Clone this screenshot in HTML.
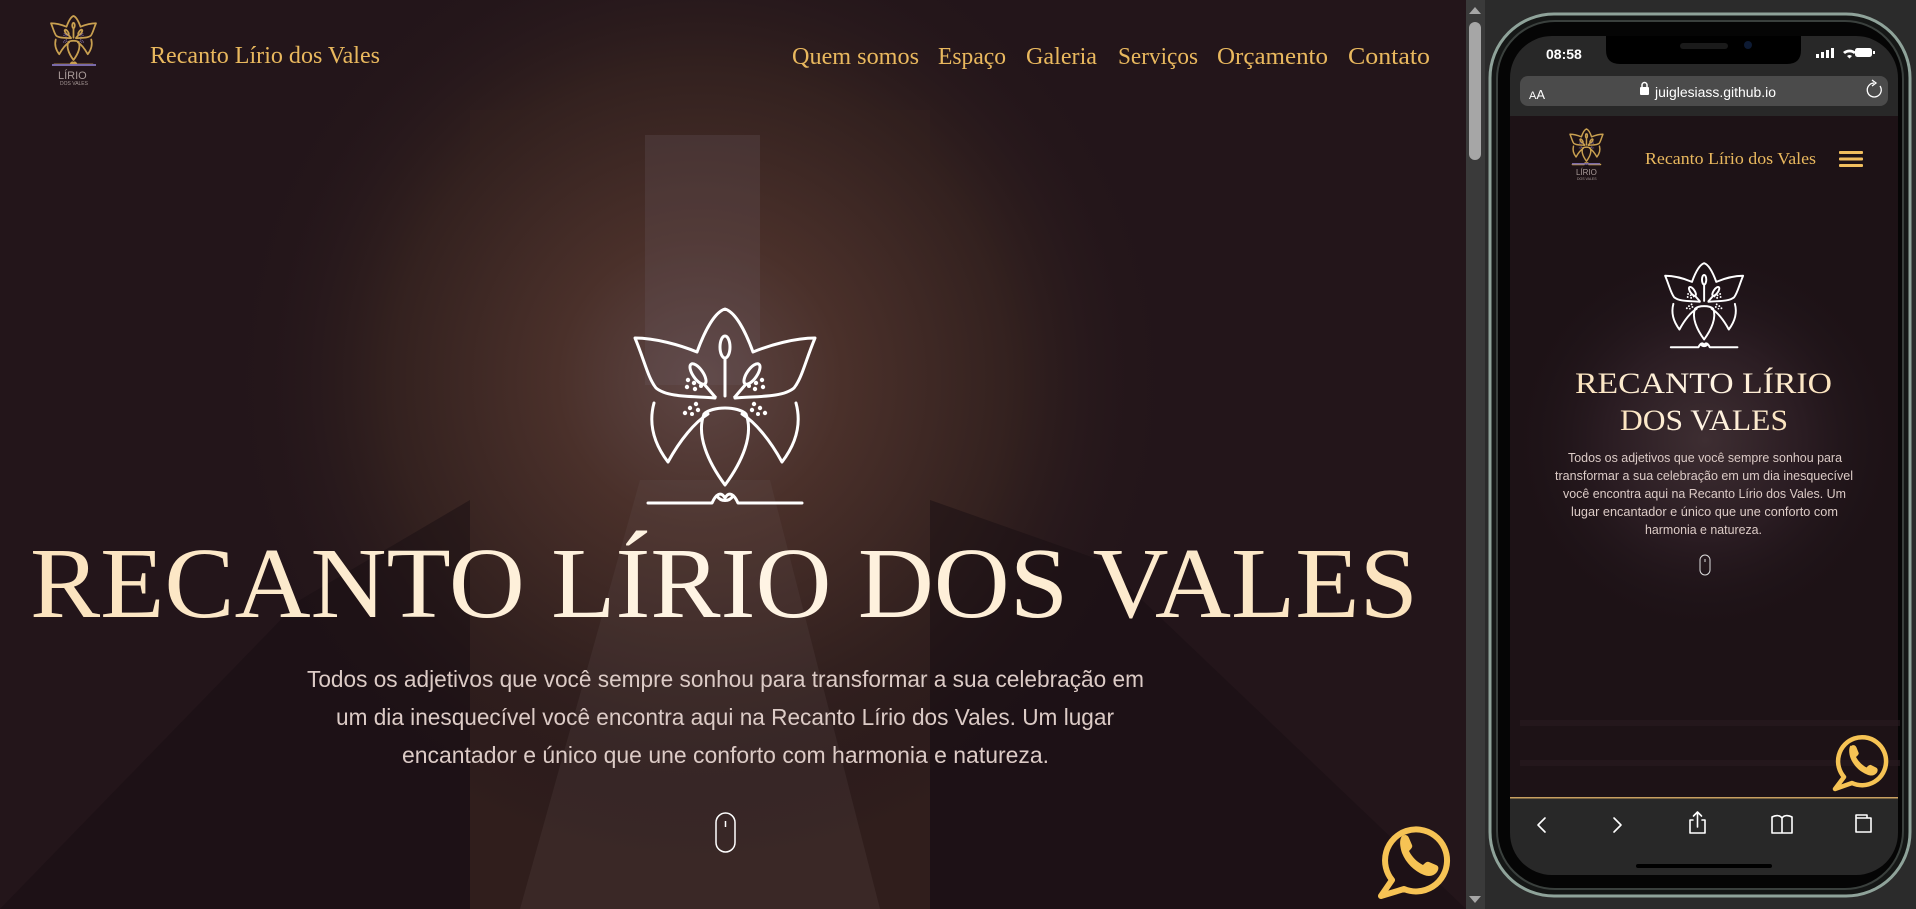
<!DOCTYPE html>
<html><head><meta charset="utf-8">
<style>
html,body{margin:0;padding:0;width:1916px;height:909px;overflow:hidden;background:#2b2b2b}
svg{position:absolute;left:0;top:0}
</style></head><body>
<svg width="1916" height="909" viewBox="0 0 1916 909" xmlns="http://www.w3.org/2000/svg">
<defs>
<radialGradient id="glow" cx="700" cy="380" r="480" gradientUnits="userSpaceOnUse">
<stop offset="0" stop-color="#5e4644"/><stop offset="0.3" stop-color="#4a302a"/><stop offset="0.65" stop-color="#33211f"/><stop offset="1" stop-color="#22151a" stop-opacity="0"/>
</radialGradient>
<radialGradient id="mglow" cx="1705" cy="440" r="200" gradientUnits="userSpaceOnUse">
<stop offset="0" stop-color="#3e2e32"/><stop offset="0.5" stop-color="#2a1c22"/><stop offset="1" stop-color="#1c1216" stop-opacity="0"/>
</radialGradient>
<linearGradient id="tg" x1="0" y1="0" x2="1" y2="0">
<stop offset="0" stop-color="#fbe3bd"/><stop offset="0.5" stop-color="#fff5e6"/><stop offset="1" stop-color="#fbe3bd"/>
</linearGradient>
<g id="lily">
<path d="M97,62 C105,40 115,22 125,19 C135,22 145,40 153,62 M97,62 C80,55 55,48 35,48 C45,72 48,88 56,98 C68,108 95,106 115,108 M153,62 C170,55 195,48 215,48 C205,72 202,88 194,98 C182,108 155,106 135,108 M54,113 C48,135 55,155 68,172 C80,150 95,132 108,124 M196,113 C202,135 195,155 182,172 C170,150 155,132 142,124 M104,124 C96,145 108,172 125,195 C142,172 154,145 146,124 C138,116 112,116 104,124 M125,69 L125,106 M48,213 L112,213 C116,204 121,201 125,208 C129,201 134,204 138,213 L202,213 M117,206 C121,212 129,212 133,206" fill="none" stroke-linecap="round" stroke-linejoin="round"/>
<ellipse cx="125" cy="57" rx="5" ry="11" fill="none"/>
<ellipse cx="98" cy="84" rx="5" ry="12" transform="rotate(-35 98 84)" fill="none"/>
<ellipse cx="152" cy="84" rx="5" ry="12" transform="rotate(35 152 84)" fill="none"/>
<path d="M104,94 L116,108 M146,94 L134,108" fill="none"/>
<g stroke="none" fill="currentColor">
<circle cx="88" cy="90" r="2.2"/><circle cx="94" cy="93" r="2.2"/><circle cx="87" cy="97" r="2.2"/><circle cx="95" cy="99" r="2.2"/><circle cx="101" cy="96" r="2"/>
<circle cx="162" cy="90" r="2.2"/><circle cx="156" cy="93" r="2.2"/><circle cx="163" cy="97" r="2.2"/><circle cx="155" cy="99" r="2.2"/><circle cx="149" cy="96" r="2"/>
<circle cx="96" cy="114" r="2.2"/><circle cx="90" cy="118" r="2.2"/><circle cx="98" cy="120" r="2.2"/><circle cx="85" cy="123" r="2.2"/><circle cx="92" cy="124" r="2"/>
<circle cx="154" cy="114" r="2.2"/><circle cx="160" cy="118" r="2.2"/><circle cx="152" cy="120" r="2.2"/><circle cx="165" cy="123" r="2.2"/><circle cx="158" cy="124" r="2"/>
</g>
</g>
</defs>

<!-- main page background -->
<rect x="0" y="0" width="1466" height="909" fill="#23151a"/>
<rect x="470" y="110" width="460" height="799" fill="#33201d" opacity="0.8"/>
<rect x="0" y="0" width="1466" height="909" fill="url(#glow)"/>
<rect x="645" y="135" width="115" height="250" fill="#6a5a62" opacity="0.25"/>
<path d="M0,909 L300,600 L470,500 L470,909 Z" fill="#170d11" opacity="0.5"/>
<path d="M1466,909 L1100,560 L930,500 L930,909 Z" fill="#170d11" opacity="0.5"/>
<path d="M520,909 L640,480 L770,480 L880,909 Z" fill="#6a5656" opacity="0.18"/>

<!-- nav -->
<g transform="translate(42.25,11.25) scale(0.25)" stroke="#c9a050" color="#9a88c8" stroke-width="7"><use href="#lily"/></g>
<rect x="52" y="64" width="44" height="2" fill="#7a6aa8"/>
<text x="58" y="79" font-family="Liberation Sans, sans-serif" font-size="11" fill="#a89a98">LÍRIO</text>
<text x="60" y="85" font-family="Liberation Sans, sans-serif" font-size="5" fill="#a89a98">DOS VALES</text>
<g font-family="Liberation Serif, serif" font-size="24" fill="#e9b85e">
<text x="150" y="63" textLength="230" lengthAdjust="spacingAndGlyphs">Recanto Lírio dos Vales</text>
<text x="792" y="64" textLength="127" lengthAdjust="spacingAndGlyphs">Quem somos</text>
<text x="938" y="64" textLength="68" lengthAdjust="spacingAndGlyphs">Espaço</text>
<text x="1026" y="64" textLength="71" lengthAdjust="spacingAndGlyphs">Galeria</text>
<text x="1118" y="64" textLength="80" lengthAdjust="spacingAndGlyphs">Serviços</text>
<text x="1217" y="64" textLength="111" lengthAdjust="spacingAndGlyphs">Orçamento</text>
<text x="1348" y="64" textLength="82" lengthAdjust="spacingAndGlyphs">Contato</text>
</g>

<!-- hero -->
<g transform="translate(600,290)" stroke="#ffffff" color="#ffffff" stroke-width="3"><use href="#lily"/></g>
<text x="30" y="617" font-family="Liberation Serif, serif" font-size="101" fill="url(#tg)" textLength="1388" lengthAdjust="spacingAndGlyphs">RECANTO LÍRIO DOS VALES</text>
<g font-family="Liberation Sans, sans-serif" font-size="23" fill="#dccbc6">
<text x="307" y="687" textLength="837" lengthAdjust="spacingAndGlyphs">Todos os adjetivos que você sempre sonhou para transformar a sua celebração em</text>
<text x="336" y="725" textLength="778" lengthAdjust="spacingAndGlyphs">um dia inesquecível você encontra aqui na Recanto Lírio dos Vales. Um lugar</text>
<text x="402" y="763" textLength="647" lengthAdjust="spacingAndGlyphs">encantador e único que une conforto com harmonia e natureza.</text>
</g>
<rect x="716" y="813" width="19" height="39" rx="9.5" fill="none" stroke="#fff" stroke-width="1.5"/>
<line x1="725.5" y1="821" x2="725.5" y2="827" stroke="#fff" stroke-width="1.5"/>
<!-- whatsapp desktop -->
<path d="M1392,880 A31,31 0 1 1 1404,889 L1381,896 Z" fill="none" stroke="#f6c354" stroke-width="6" stroke-linejoin="round"/>
<path d="M1402,836 c3,-2 6,-1 7,2 l3,7 c1,2 -1,4 -3,6 c3,6 8,11 14,14 c2,-2 4,-4 6,-3 l7,3 c3,1 3,4 1,7 c-3,4 -8,5 -13,3 c-10,-4 -18,-12 -22,-22 c-2,-6 -3,-13 0,-17 z" fill="#f6c354"/>

<!-- scrollbar -->
<rect x="1466" y="0" width="19" height="909" fill="#3a3a3a"/>
<rect x="1469" y="22" width="12" height="138" rx="6" fill="#a6a6a6"/>
<path d="M1469,14 L1475,7 L1481,14 Z" fill="#a6a6a6"/>
<path d="M1469,896 L1475,903 L1481,896 Z" fill="#a6a6a6"/>
<rect x="1485" y="0" width="431" height="909" fill="#2b2b2b"/>

<!-- phone -->
<rect x="1490" y="14" width="420" height="882" rx="64" fill="#151716" stroke="#8fa39a" stroke-width="3"/>
<rect x="1497" y="21" width="406" height="868" rx="58" fill="#050505" stroke="#3a403d" stroke-width="2"/>
<rect x="1510" y="36" width="388" height="839" rx="42" fill="#282828"/>
<path d="M1606,36 L1801,36 L1801,50 Q1801,64 1787,64 L1620,64 Q1606,64 1606,50 Z" fill="#000"/>
<rect x="1680" y="43" width="48" height="6" rx="3" fill="#1a1a1a"/>
<circle cx="1748" cy="45" r="4" fill="#0d1a33"/>
<text x="1546" y="59" font-family="Liberation Sans, sans-serif" font-weight="bold" font-size="14" fill="#fff">08:58</text>
<g fill="#fff">
<rect x="1816" y="54" width="3" height="4"/><rect x="1821" y="52" width="3" height="6"/><rect x="1826" y="50" width="3" height="8"/><rect x="1831" y="48" width="3" height="10"/>
<path d="M1843,52 a10,10 0 0 1 13,0 l-2,2 a7,7 0 0 0 -9,0 z M1847,56 a4,4 0 0 1 5,0 l-2.5,2.5 z"/>
<rect x="1855" y="48" width="17" height="9" rx="2.5"/><rect x="1873" y="51" width="2" height="3"/>
</g>
<rect x="1520" y="76" width="368" height="30" rx="8" fill="#4b4b4b"/>
<text x="1529" y="99" font-family="Liberation Sans, sans-serif" font-size="11" fill="#fff">A<tspan font-size="13">A</tspan></text>
<rect x="1640" y="87" width="9" height="8" rx="1" fill="#fff"/>
<path d="M1642,88 v-3 a2.5,2.5 0 0 1 5,0 v3" fill="none" stroke="#fff" stroke-width="1.5"/>
<text x="1655" y="97" font-family="Liberation Sans, sans-serif" font-size="13.5" fill="#fff" textLength="121" lengthAdjust="spacingAndGlyphs">juiglesiass.github.io</text>
<path d="M1880,86 a7,7 0 1 1 -6,-3" fill="none" stroke="#fff" stroke-width="1.3"/>
<path d="M1872,80 l4,3 l-4,3" fill="none" stroke="#fff" stroke-width="1.3"/>

<!-- mobile page -->
<rect x="1510" y="116" width="388" height="681" fill="#1d1216"/>
<rect x="1510" y="116" width="388" height="681" fill="url(#mglow)"/>
<rect x="1520" y="720" width="380" height="6" fill="#2a1a22" opacity="0.6"/>
<rect x="1520" y="760" width="380" height="6" fill="#2a1a22" opacity="0.6"/>
<g transform="translate(1563.6,125.5) scale(0.183)" stroke="#c9a050" color="#9a88c8" stroke-width="8"><use href="#lily"/></g>
<rect x="1572" y="163" width="28" height="1.5" fill="#7a6aa8"/>
<text x="1576" y="175" font-family="Liberation Sans, sans-serif" font-size="8" fill="#a89a98">LÍRIO</text>
<text x="1577" y="180" font-family="Liberation Sans, sans-serif" font-size="3.5" fill="#a89a98">DOS VALES</text>
<text x="1645" y="164" font-family="Liberation Serif, serif" font-size="17" fill="#e9b85e" textLength="171" lengthAdjust="spacingAndGlyphs">Recanto Lírio dos Vales</text>
<g fill="#f1bf5e"><rect x="1839" y="151" width="24" height="3" rx="1"/><rect x="1839" y="157.5" width="24" height="3" rx="1"/><rect x="1839" y="164" width="24" height="3" rx="1"/></g>
<g transform="translate(1650,255) scale(0.433)" stroke="#fff" color="#fff" stroke-width="4.5"><use href="#lily"/></g>
<g font-family="Liberation Serif, serif" font-size="30" fill="url(#tg)">
<text x="1575" y="393" textLength="257" lengthAdjust="spacingAndGlyphs">RECANTO LÍRIO</text>
<text x="1620" y="430" textLength="168" lengthAdjust="spacingAndGlyphs">DOS VALES</text>
</g>
<g font-family="Liberation Sans, sans-serif" font-size="12.5" fill="#dccbc6">
<text x="1568" y="462" textLength="274" lengthAdjust="spacingAndGlyphs">Todos os adjetivos que você sempre sonhou para</text>
<text x="1555" y="480" textLength="298" lengthAdjust="spacingAndGlyphs">transformar a sua celebração em um dia inesquecível</text>
<text x="1563" y="498" textLength="283" lengthAdjust="spacingAndGlyphs">você encontra aqui na Recanto Lírio dos Vales. Um</text>
<text x="1571" y="516" textLength="267" lengthAdjust="spacingAndGlyphs">lugar encantador e único que une conforto com</text>
<text x="1645" y="534" textLength="117" lengthAdjust="spacingAndGlyphs">harmonia e natureza.</text>
</g>
<rect x="1700" y="555" width="10" height="20" rx="5" fill="none" stroke="#ddd" stroke-width="1"/>
<line x1="1705" y1="559" x2="1705" y2="562" stroke="#ddd" stroke-width="1"/>
<!-- whatsapp mobile -->
<path d="M1844,777 A24,24 0 1 1 1852,783 L1835,789 Z" fill="none" stroke="#f6c354" stroke-width="4.5" stroke-linejoin="round"/>
<path d="M1851,746 c2,-1.5 4.5,-1 5.5,1.5 l2,5 c1,1.5 -1,3 -2.5,4.5 c2.5,4.5 6,8 10.5,10.5 c1.5,-1.5 3,-3 4.5,-2.5 l5,2.5 c2,1 2,3 1,5 c-2,3 -6,4 -10,2 c-7.5,-3 -13.5,-9 -16.5,-16.5 c-1.5,-4.5 -2,-9.5 0,-12.5 z" fill="#f6c354"/>

<!-- bottom toolbar -->
<rect x="1510" y="797" width="388" height="1.5" fill="#c9a060"/>
<g fill="none" stroke="#fff" stroke-width="1.6" stroke-linecap="round" stroke-linejoin="round">
<path d="M1545,818 L1538,825 L1545,832"/>
<path d="M1614,818 L1621,825 L1614,832"/>
<path d="M1693,820 h-3 v13 h15 v-13 h-3 M1697.5,827 v-15 M1693.5,816 l4,-4 l4,4"/>
<path d="M1772,817 v16 h10 h10 v-16 c-4,-2 -8,-2 -10,1 c-2,-3 -6,-3 -10,-1 z M1782,818 v15"/>
<path d="M1856,818 v-3 h11 v2 M1860,818 h11 v14 h-15 v-14 z"/>
</g>
<rect x="1636" y="864" width="136" height="4" rx="2" fill="#000"/>
</svg>
</body></html>
